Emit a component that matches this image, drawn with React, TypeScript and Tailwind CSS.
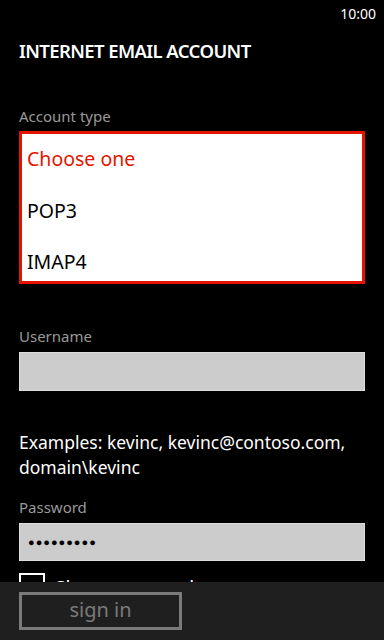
export default function App() {
  return (
    <div className="flex h-[640px] w-[384px] flex-col overflow-hidden bg-black text-white font-['Noto_Sans',sans-serif]">
      <div className="h-[582px] shrink-0 overflow-hidden">
        <div className="flex h-[26px] items-center justify-end pr-[8px] text-[14px]">10:00</div>

        <div className="px-[19px]">
          <h1 className="mt-[12px] text-[18.5px] font-semibold leading-[26px] tracking-[-0.6px]">INTERNET EMAIL ACCOUNT</h1>

          <div className="mt-[42px] text-[15px] leading-[20px] text-[#999999]">Account type</div>
          <ul className="mt-[5px] h-[153px] border-[3px] border-[#e51400] bg-white pt-[8px] text-[19.5px] text-black">
            <li className="px-[5px] leading-[34px] text-[#e51400]">Choose one</li>
            <li className="mt-[18px] px-[5px] leading-[34px]">POP3</li>
            <li className="mt-[17px] px-[5px] leading-[34px]">IMAP4</li>
          </ul>

          <div className="mt-[42px] text-[15px] leading-[20px] text-[#999999]">Username</div>
          <div className="mt-[6px] h-[39px] border border-[#dddddd] bg-[#cccccc]" />

          <p className="mt-[39px] text-[17.5px] leading-[25px]">
            Examples: kevinc, kevinc@contoso.com,
            <br />
            domain\kevinc
          </p>

          <div className="mt-[17px] text-[15px] leading-[20px] text-[#999999]">Password</div>
          <div className="mt-[6px] flex h-[38px] items-center border border-[#dddddd] bg-[#cccccc] px-[8px] text-[11px] tracking-[1px] text-black">
            ●●●●●●●●●
          </div>

          <div className="mt-[12px] flex items-start gap-[10px]">
            <div className="h-[26px] w-[26px] shrink-0 border-2 border-white" />
            <span className="pt-[2px] text-[19px] leading-[26px]">Show password</span>
          </div>
        </div>
      </div>

      <div className="h-[58px] shrink-0 bg-[#1f1f1f] px-[19px] pt-[10px]">
        <button className="flex h-[38px] w-[163px] items-center justify-center border-[3px] border-[#7a7a7a] pb-[3px] text-[20px] text-[#7a7a7a]">
          sign in
        </button>
      </div>
    </div>
  )
}
